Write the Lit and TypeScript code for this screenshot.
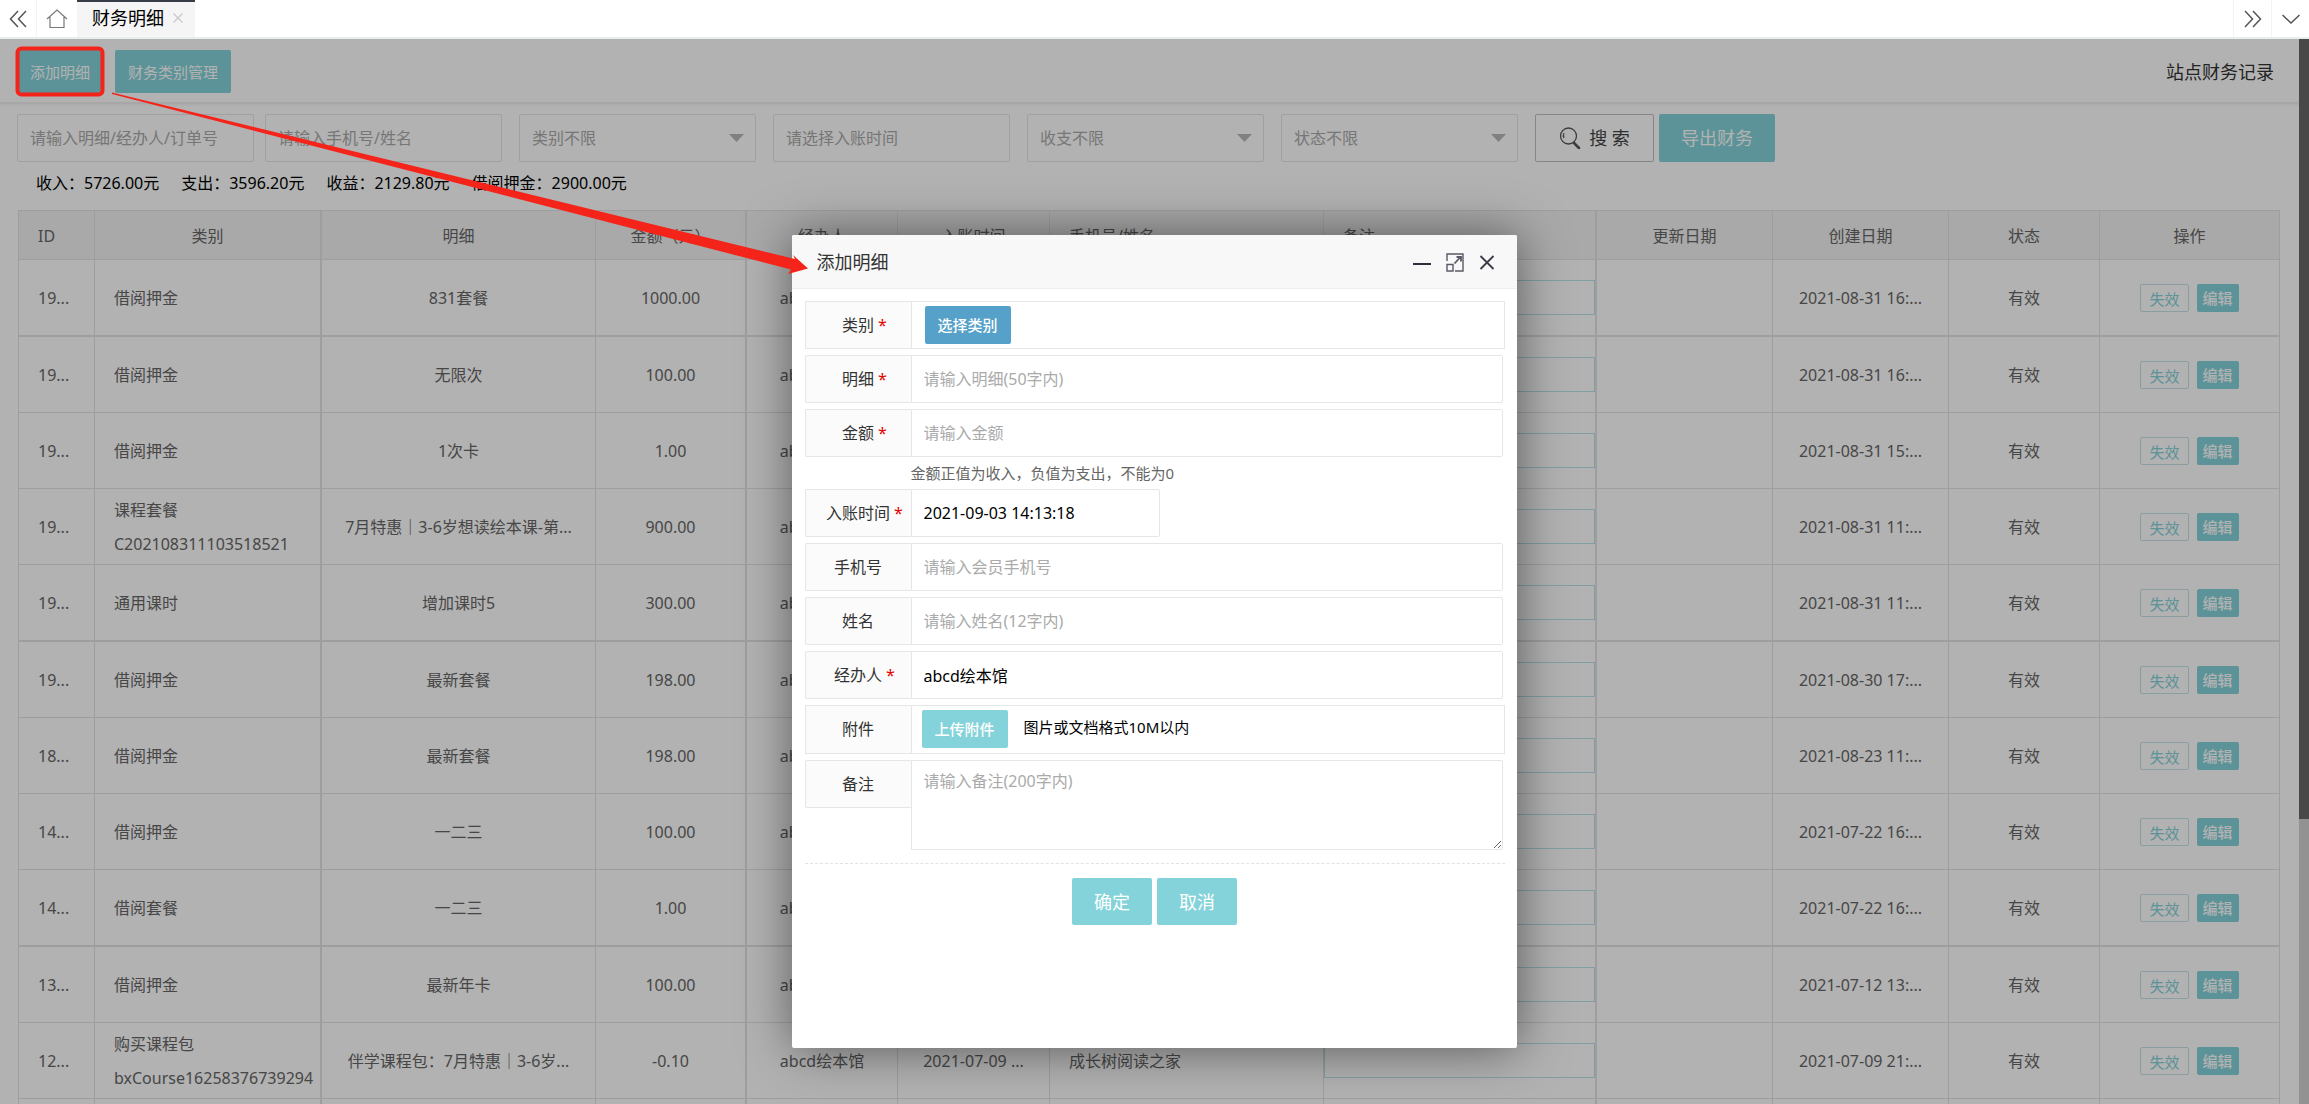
import { LitElement, html, css, svg } from "lit";
import { customElement } from "lit/decorators.js";

interface Row {
  id: string;
  type: string[];
  detail: string;
  amount: string;
  booked: string;
  member: string;
  created: string;
}

const r = (id: string, type: string | string[], detail: string, amount: string, booked: string, created: string, member = ""): Row => ({
  id, type: Array.isArray(type) ? type : [type], detail, amount, booked, member, created,
});

const ROWS: Row[] = [
  r("19...", "借阅押金", "831套餐", "1000.00", "2021-08-31 ...", "2021-08-31 16:..."),
  r("19...", "借阅押金", "无限次", "100.00", "2021-08-31 ...", "2021-08-31 16:..."),
  r("19...", "借阅押金", "1次卡", "1.00", "2021-08-31 ...", "2021-08-31 15:..."),
  r("19...", ["课程套餐", "C202108311103518521"], "7月特惠｜3-6岁想读绘本课-第...", "900.00", "2021-08-31 ...", "2021-08-31 11:..."),
  r("19...", "通用课时", "增加课时5", "300.00", "2021-08-31 ...", "2021-08-31 11:..."),
  r("19...", "借阅押金", "最新套餐", "198.00", "2021-08-30 ...", "2021-08-30 17:..."),
  r("18...", "借阅押金", "最新套餐", "198.00", "2021-08-23 ...", "2021-08-23 11:..."),
  r("14...", "借阅押金", "一二三", "100.00", "2021-07-22 ...", "2021-07-22 16:..."),
  r("14...", "借阅套餐", "一二三", "1.00", "2021-07-22 ...", "2021-07-22 16:..."),
  r("13...", "借阅押金", "最新年卡", "100.00", "2021-07-12 ...", "2021-07-12 13:..."),
  r("12...", ["购买课程包", "bxCourse16258376739294"], "伴学课程包：7月特惠｜3-6岁...", "-0.10", "2021-07-09 ...", "2021-07-09 21:...", "成长树阅读之家"),
];

const HEADS = ["ID", "类别", "明细", "金额（元）", "经办人", "入账时间", "手机号/姓名", "备注", "更新日期", "创建日期", "状态", "操作"];

@customElement("app-root")
export class AppRoot extends LitElement {
  static styles = css`
    :host {
      display: block;
      position: relative;
      height: 100vh;
      overflow: hidden;
      background: #fff;
      color: #333;
      font: 16px/24px "Noto Sans", "Noto Sans CJK SC", sans-serif;
    }
    * { box-sizing: border-box; }
    button, input, select, textarea { font: inherit; margin: 0; outline: none; }
    button { cursor: pointer; border: 0; padding: 0; }
    a { color: inherit; text-decoration: none; }
    svg { display: block; fill: none; }
    .frame { display: flex; flex-direction: column; height: 100%; }

    .tabs { display: flex; height: 39px; flex: none; border-bottom: 2px solid #e9eeee; background: #fff; }
    .tool { width: 37px; display: grid; place-items: center; background: none; border-right: 1px solid #f3f3f3; }
    .tool.end { border-right: 0; border-left: 1px solid #f3f3f3; width: 38px; }
    .tool.home { width: 40px; border-right: 0; }
    .tab { display: flex; align-items: center; gap: 9px; padding: 0 12px 2px 15px; background: #f5f5f5; color: #000; font-size: 18px; position: relative; }
    .tab::before { content: ""; position: absolute; left: 0; right: 0; top: 0; height: 2px; background: #393d49; }
    .tab button { background: none; }
    .spacer { flex: 1; }

    .body { flex: 1; min-height: 0; display: flex; overflow: hidden; }
    .page { flex: 1; min-width: 0; }
    .track { width: 10px; background: #d2d2d2; flex: none; }
    .thumb { height: 73.2%; background: #676767; }

    .head { display: flex; align-items: center; gap: 12px; height: 64px; padding: 2px 25px 0 17px; border-bottom: 1px solid #f0f0f0; box-shadow: 0 1px 3px rgba(0, 0, 0, 0.1); }
    .head a { margin-left: auto; font-size: 18px; }
    .btn { background: #85d3da; color: #fff; border-radius: 2px; font-size: 15px; height: 43px; padding: 0 13px; white-space: nowrap; }
    .btn.lg { font-size: 18px; height: 47px; padding: 0 22px; }
    .btn.sm { height: 38px; padding: 0 13px; font-weight: 500; }
    .btn.blue { background: #55a1c9; }

    .filters { display: flex; gap: 17px; padding: 11px 17px 0; }
    .pair { display: flex; gap: 11px; }
    .field { width: 237px; height: 48px; border: 1px solid #e6e6e6; border-radius: 2px; background: #fff; padding: 0 12px; color: #aaa; }
    input::placeholder, textarea::placeholder { color: #aaa; opacity: 1; }
    .pick { display: grid; align-items: center; justify-items: end; }
    .pick > * { grid-area: 1 / 1; }
    .pick select { appearance: none; }
    .pick svg { margin-right: 12px; pointer-events: none; }
    .search { display: flex; align-items: center; justify-content: center; gap: 8px; width: 119px; height: 48px; border: 1px solid #c0c0c0; border-radius: 2px; background: #fff; color: #444; font-size: 18px; }
    .actions { display: flex; gap: 5px; }
    .actions .btn { height: 48px; }

    .stats { display: flex; gap: 22px; padding: 9px 36px 15px; color: #000; }

    .tablebox { padding: 0 19px 0 18px; }
    table { width: 100%; table-layout: fixed; border-collapse: separate; border-spacing: 0; border: 1px solid #e2e2e2; border-right: 0; border-bottom: 0; color: #666; }
    th, td { border: 0 solid #e2e2e2; border-width: 0 1px 1px 0; padding: 0 19px; text-align: center; white-space: nowrap; font-weight: 400; overflow: hidden; }
    th { height: 49px; padding-top: 2px; background: #f2f2f2; }
    td { height: 76px; }
    tbody tr:nth-child(4n + 1) td { height: 77px; border-bottom-width: 2px; }
    th:nth-child(2), td:nth-child(2), th:nth-child(4), td:nth-child(4), th:nth-child(8), td:nth-child(8) { border-right-width: 2px; }
    .left { text-align: left; }
    th:nth-child(1), th:nth-child(7), th:nth-child(8) { text-align: left; }
    .type { line-height: 34px; padding-right: 0; }
    .note { padding: 0; }
    .note input { display: block; width: 100%; height: 35px; border: 1px solid #b9e4e8; background: none; }
    .ops { display: flex; justify-content: center; gap: 8px; }
    .mini { height: 28px; border-radius: 2px; background: #85d3da; color: #fff; font-size: 15px; font-weight: 500; line-height: 28px; padding: 0 6px; }
    .mini.ghost { background: #fff; border: 1px solid #c3e3e6; color: #85d3da; font-weight: 400; padding: 0 8px; }
    .c1 { width: 76px; } .c2 { width: 227px; } .c3 { width: 274px; } .c4 { width: 151px; }
    .c6 { width: 152px; } .c8 { width: 273px; } .c9 { width: 176px; }

    .shade { position: absolute; inset: 39px 0 0; background: rgba(0, 0, 0, 0.3); }
    .modal { position: absolute; left: calc(50% - 363px); top: 235px; width: 725px; height: 813px; background: #fff; border-radius: 2px; box-shadow: 1px 1px 50px rgba(0, 0, 0, 0.5); }
    .title { display: flex; align-items: center; height: 54px; padding: 0 22px 0 25px; border-bottom: 1px solid #eee; background: #f8f8f8; border-radius: 2px 2px 0 0; }
    .title h2 { margin: 0 auto 0 0; font-size: 18px; font-weight: 400; }
    .title button { background: none; margin-left: 15px; }
    form { display: flex; flex-direction: column; gap: 6px; padding: 12px 12px 0 13px; }
    .row { display: flex; align-items: flex-start; margin-right: 2px; }
    .row.wide { margin-right: 0; border: 1px solid #e6e6e6; align-items: flex-start; }
    .name { flex: none; width: 106px; height: 48px; line-height: 46px; text-align: center; border: 1px solid #e6e6e6; border-right: 0; border-radius: 2px 0 0 2px; background: #fbfbfb; }
    .row.wide .name { border-width: 0 1px 0 0; height: 46px; border-right: 1px solid #e6e6e6; }
    .row.file .name { height: 47px; }
    .row.wide .btn { margin-top: 4px; }
    .star { display: inline-block; width: 12px; margin: 0 -16px 0 4px; color: #e60000; text-align: left; }
    .input { flex: 1; min-width: 0; height: 48px; border: 1px solid #e6e6e6; border-radius: 0 2px 2px 0; background: #fff; padding: 0 12px; color: #000; }
    .input.short { flex: none; width: 249px; }
    textarea.input { height: 90px; padding: 8px 12px; resize: vertical; display: block; }
    .hint { margin: -6px 0; padding-left: 106px; font-size: 15px; line-height: 32px; height: 32px; color: #666; }
    .gap1 { margin-left: 13px; }
    .gap2 { margin-left: 10px; }
    .tip { margin-left: 16px; font-size: 15px; line-height: 42px; color: #000; }
    .foot { display: flex; justify-content: center; gap: 5px; margin-top: 7px; padding-top: 14px; border-top: 1px dashed #e2e2e2; }

    .mark { position: absolute; left: 0; top: 0; pointer-events: none; }
  `;

  private pick(label: string) {
    return html`<div class="pick">
      <select class="field" aria-label=${label}><option>${label}</option></select>
      <svg width="15" height="8" viewBox="0 0 15 8"><path d="M0 0h15L7.500 8z" fill="#b8b8b8" /></svg>
    </div>`;
  }

  private row(label: string, id: string, required: boolean, placeholder: string, value = "", short = false) {
    return html`<div class="row">
      <label class="name" for=${id}>${label}${required ? html`<span class="star">*</span>` : ""}</label>
      <input class="input ${short ? "short" : ""}" id=${id} placeholder=${placeholder} .value=${value} />
    </div>`;
  }

  render() {
    const dark = "#555";
    return html`
      <div class="frame">
        <nav class="tabs">
          <button class="tool" aria-label="向左"><svg width="18" height="18" viewBox="0 0 18 18" stroke=${dark} stroke-width="1.5"><path d="M9 1 1.500 9 9 17M17 1 9.500 9 17 17" /></svg></button>
          <button class="tool home" aria-label="主页"><svg width="22" height="20" viewBox="0 0 22 20" stroke="#777" stroke-width="1.2"><path d="M1 10 11 1l10 9M4 8v10.500h14V8" /></svg></button>
          <div class="tab"><span>财务明细</span><button aria-label="关闭标签"><svg width="10" height="10" viewBox="0 0 10 10" stroke="#c8c8c8" stroke-width="1.2"><path d="M.5.5l9 9M9.500.5l-9 9" /></svg></button></div>
          <span class="spacer"></span>
          <button class="tool end" aria-label="向右"><svg width="18" height="18" viewBox="0 0 18 18" stroke=${dark} stroke-width="1.5"><path d="M1 1l7.500 8L1 17M9 1l7.500 8L9 17" /></svg></button>
          <button class="tool end" aria-label="更多"><svg width="18" height="10" viewBox="0 0 18 10" stroke=${dark} stroke-width="1.5"><path d="M.5 1 9 9l8.500-8" /></svg></button>
        </nav>
        <div class="body">
          <main class="page">
            <header class="head">
              <button class="btn">添加明细</button>
              <button class="btn">财务类别管理</button>
              <a href="#records">站点财务记录</a>
            </header>
            <div class="filters">
              <div class="pair">
                <input class="field" aria-label="明细" placeholder="请输入明细/经办人/订单号" />
                <input class="field" aria-label="手机号" placeholder="请输入手机号/姓名" />
              </div>
              ${this.pick("类别不限")}
              <input class="field" aria-label="入账时间" placeholder="请选择入账时间" />
              ${this.pick("收支不限")}
              ${this.pick("状态不限")}
              <div class="actions">
                <button class="search"><svg width="22" height="22" viewBox="0 0 22 22" stroke="#555"><circle cx="9.500" cy="9" r="8" stroke-width="1.300" /><path d="M5 11a5 5 0 0 1 0-5" stroke-width="1.200" /><path d="M15 16l5 5" stroke-width="2.600" stroke-linecap="round" /></svg><span>搜 索</span></button>
                <button class="btn lg">导出财务</button>
              </div>
            </div>
            <div class="stats"><span>收入：5726.00元</span><span>支出：3596.20元</span><span>收益：2129.80元</span><span>借阅押金：2900.00元</span></div>
            <div class="tablebox">
              <table>
                <colgroup><col class="c1" /><col class="c2" /><col class="c3" /><col class="c4" /><col class="c4" /><col class="c6" /><col class="c3" /><col class="c8" /><col class="c9" /><col class="c9" /><col class="c4" /><col /></colgroup>
                <thead><tr>${HEADS.map((h) => html`<th>${h}</th>`)}</tr></thead>
                <tbody>
                  ${ROWS.map((d) => html`<tr>
                    <td class="left">${d.id}</td>
                    <td class="left type">${d.type.map((t) => html`<div>${t}</div>`)}</td>
                    <td>${d.detail}</td>
                    <td>${d.amount}</td>
                    <td>abcd绘本馆</td>
                    <td>${d.booked}</td>
                    <td class="left">${d.member}</td>
                    <td class="note"><input aria-label="备注" /></td>
                    <td></td>
                    <td>${d.created}</td>
                    <td>有效</td>
                    <td><div class="ops"><button class="mini ghost">失效</button><button class="mini">编辑</button></div></td>
                  </tr>`)}
                  <tr>${HEADS.map(() => html`<td></td>`)}</tr>
                </tbody>
              </table>
            </div>
          </main>
          <div class="track"><div class="thumb"></div></div>
        </div>
      </div>
      <div class="shade"></div>
      <section class="modal" role="dialog" aria-label="添加明细">
        <header class="title">
          <h2>添加明细</h2>
          <button aria-label="最小化"><svg width="18" height="18" viewBox="0 0 18 18"><path d="M0 11h18" stroke="#2e2d3c" stroke-width="2" /></svg></button>
          <button aria-label="最大化"><svg width="18" height="20" viewBox="0 0 18 20" stroke="#5a5966" stroke-width="1.400"><path d="M1 9V2h16v17H9" /><path d="M1 12.500h6V19H1z" /><path d="M8.500 11.500l6-6.500M10.500 5H15v4.500" stroke-width="1.800" /></svg></button>
          <button aria-label="关闭"><svg width="16" height="18" viewBox="0 0 16 18" stroke="#3c3b48" stroke-width="1.800"><path d="M1.500 3l13 13M14.500 3l-13 13" /></svg></button>
        </header>
        <form>
          <div class="row wide"><span class="name">类别<span class="star">*</span></span><button type="button" class="btn sm blue gap1">选择类别</button></div>
          ${this.row("明细", "detail", true, "请输入明细(50字内)")}
          ${this.row("金额", "amount", true, "请输入金额")}
          <p class="hint">金额正值为收入，负值为支出，不能为0</p>
          ${this.row("入账时间", "time", true, "", "2021-09-03 14:13:18", true)}
          ${this.row("手机号", "phone", false, "请输入会员手机号")}
          ${this.row("姓名", "member", false, "请输入姓名(12字内)")}
          ${this.row("经办人", "agent", true, "", "abcd绘本馆")}
          <div class="row wide file"><span class="name">附件</span><button type="button" class="btn sm gap2">上传附件</button><span class="tip">图片或文档格式10M以内</span></div>
          <div class="row"><label class="name" for="note">备注</label><textarea class="input" id="note" placeholder="请输入备注(200字内)"></textarea></div>
          <div class="foot"><button type="button" class="btn lg">确定</button><button type="button" class="btn lg">取消</button></div>
        </form>
      </section>
      <svg class="mark" width="820" height="290" viewBox="0 0 820 290">
        ${svg`<rect x="17.500" y="48.500" width="85" height="46" rx="4" stroke="#f5241a" stroke-width="4" />
        <path d="M112 92.500L795 259L793 255L808 268.500L788 274L791 269.500L112 94Z" fill="#f5241a" />`}
      </svg>
    `;
  }
}
